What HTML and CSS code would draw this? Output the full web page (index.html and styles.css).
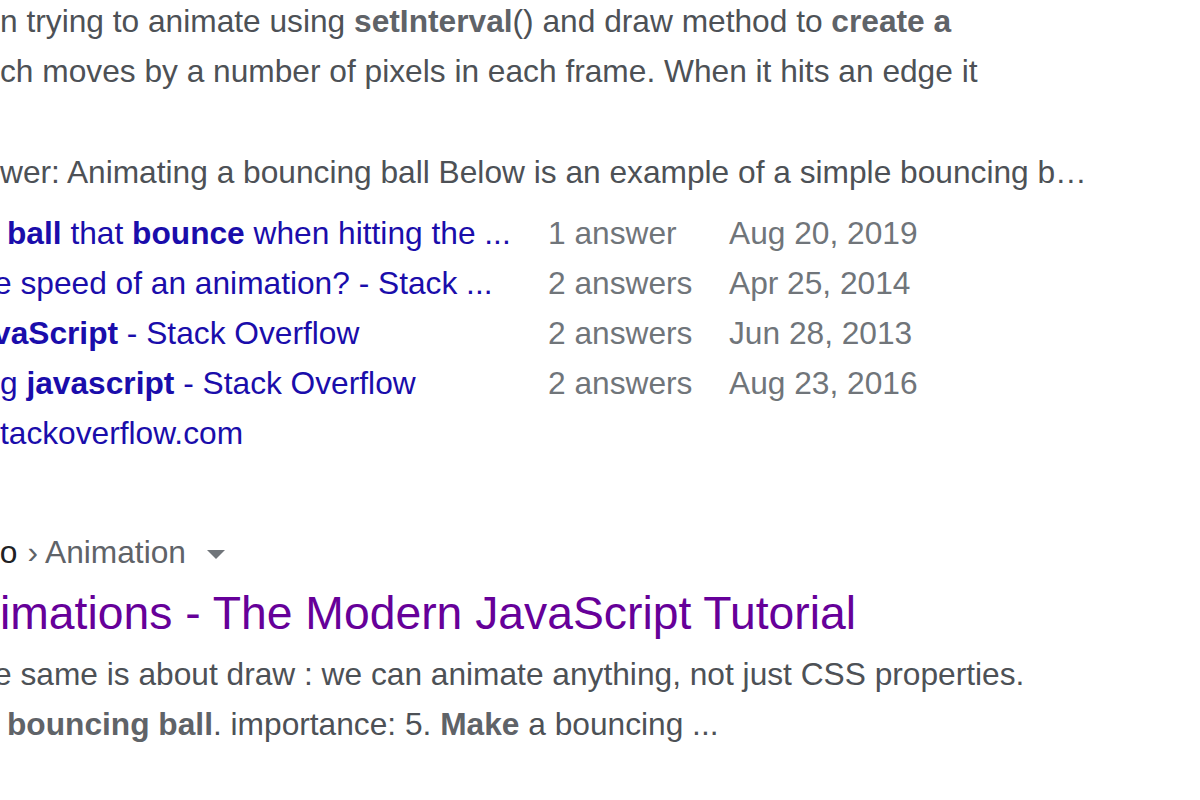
FILE: index.html
```html
<!DOCTYPE html>
<html>
<head>
<meta charset="utf-8">
<link rel="stylesheet" href="styles.css">
</head>
<body>
<main class="page">
  <section class="result">
    <div class="snippet">
      <div class="line">n trying to animate using <b>setInterval</b>() and draw method to <b>create a</b></div>
      <div class="line">ch moves by a number of pixels in each frame. When it hits an edge it</div>
    </div>
    <div class="answer line">wer: Animating a bouncing ball Below is an example of a simple bouncing b…</div>
    <div class="related">
      <a class="rel-title lead"><b>ball</b> that <b>bounce</b> when hitting the ...</a>
      <span class="rel-count">1 answer</span>
      <span class="rel-date">Aug 20, 2019</span>

      <a class="rel-title"><span class="cut-e">e</span> speed of an animation? - Stack ...</a>
      <span class="rel-count">2 answers</span>
      <span class="rel-date">Apr 25, 2014</span>

      <a class="rel-title"><span class="cut-v">v</span><b>aScript</b> - Stack Overflow</a>
      <span class="rel-count">2 answers</span>
      <span class="rel-date">Jun 28, 2013</span>

      <a class="rel-title">g <b>javascript</b> - Stack Overflow</a>
      <span class="rel-count">2 answers</span>
      <span class="rel-date">Aug 23, 2016</span>

      <a class="rel-title rel-more">tackoverflow.com</a>
    </div>
  </section>

  <section class="result second">
    <div class="crumb"><span class="domain"><span class="cut-f">f</span>o</span> › Animation <span class="caret"></span></div>
    <h3 class="title">imations - The Modern JavaScript Tutorial</h3>
    <div class="snippet">
      <div class="line"><span class="cut-e">e</span> same is about draw : we can animate anything, not just CSS properties.</div>
      <div class="line lead"><b>bouncing ball</b>. importance: 5. <b>Make</b> a bouncing ...</div>
    </div>
  </section>
</main>
</body>
</html>
```

FILE: styles.css
```css
html, body {
  margin: 0;
  padding: 0;
  background: #ffffff;
  overflow: hidden;
}

body {
  width: 1200px;
  height: 800px;
  font-family: "Liberation Sans", Arial, sans-serif;
  font-size: 31.7px;
  color: #4d5156;
}

.page {
  margin-top: -4px;
}

.line {
  white-space: nowrap;
  line-height: 50px;
  height: 50px;
}

b {
  font-weight: bold;
}

.snippet b {
  color: #5f6368;
}

.lead {
  padding-left: 7px;
}

.answer {
  margin-top: 51px;
}

.related {
  display: grid;
  grid-template-columns: 548px 181px auto;
  margin-top: 11px;
  line-height: 50px;
  white-space: nowrap;
}

.rel-title {
  color: #1a0dab;
  text-decoration: none;
  overflow: hidden;
}

.rel-count,
.rel-date {
  color: #70757a;
}

.rel-more {
  grid-column: 1 / 4;
}

.cut-e {
  display: inline-block;
  margin-left: -6px;
}

.cut-v {
  display: inline-block;
  margin-left: -7px;
  font-weight: bold;
}

.cut-f {
  display: inline-block;
  margin-left: -9px;
}

.second {
  margin-top: 69px;
}

.crumb {
  line-height: 50px;
  height: 50px;
  color: #5f6368;
  white-space: nowrap;
  display: flex;
  align-items: center;
}

.crumb .domain {
  color: #202124;
  margin-right: 10px;
}

.caret {
  display: inline-block;
  width: 0;
  height: 0;
  border-left: 9px solid transparent;
  border-right: 9px solid transparent;
  border-top: 9px solid #70757a;
  margin-left: 21px;
  margin-top: 4px;
}

.title {
  margin: 7px 0 7px;
  font-size: 46.3px;
  font-weight: normal;
  line-height: 58px;
  color: #660099;
  white-space: nowrap;
}
```
